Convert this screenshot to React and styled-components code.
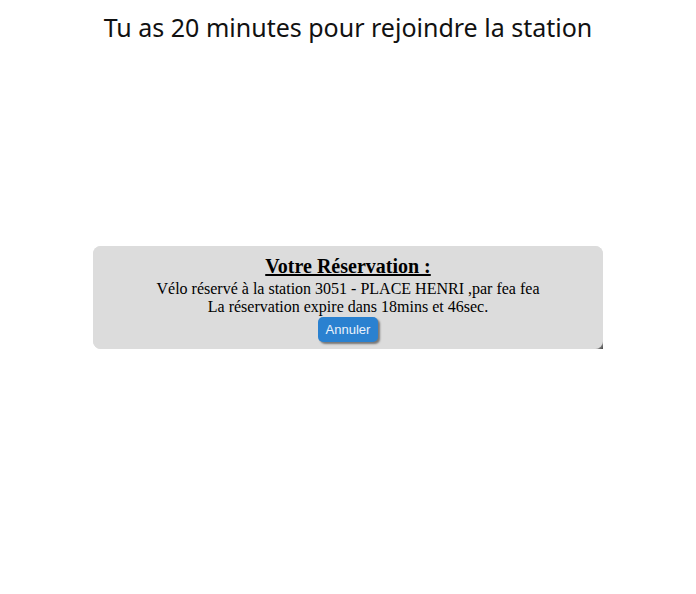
import React from 'react'
import styled, { createGlobalStyle } from 'styled-components'

const Global = createGlobalStyle`
  html, body { margin: 0; padding: 0; background: #fff; }
  body { width: 696px; height: 594px; }
`

const Page = styled.div`
  display: flex;
  flex-direction: column;
  align-items: center;
`

const Headline = styled.h1`
  margin: 10px 0 0 0;
  font-family: "Noto Sans", "Open Sans", sans-serif;
  font-weight: 400;
  font-size: 25px;
  line-height: 34px;
  color: #111;
`

const Card = styled.div`
  position: relative;
  z-index: 0;
  margin-top: 202px;
  width: 510px;
  box-sizing: border-box;
  padding: 7px 0 7px;
  background: #dcdcdc;
  border-radius: 8px;
  display: flex;
  flex-direction: column;
  align-items: center;
  font-family: "Liberation Serif", "Times New Roman", serif;
  color: #000;

  &::before {
    content: "";
    position: absolute;
    right: 0;
    bottom: 0;
    width: 8px;
    height: 8px;
    z-index: -1;
    background: linear-gradient(135deg, #dcdcdc 40%, #8a8a8a 62%, #444 100%);
  }

  &::after {
    content: "";
    position: absolute;
    inset: 0;
    z-index: -1;
    border-radius: 8px;
    background: #dcdcdc;
  }
`

const CardTitle = styled.h2`
  margin: 0;
  font-size: 20px;
  line-height: 27px;
  font-weight: 700;
  text-decoration: underline;
`

const Line = styled.p`
  margin: 0;
  font-size: 16px;
  line-height: 18px;
`

const CancelButton = styled.button`
  margin-top: 1px;
  padding: 0 8px;
  height: 25px;
  border: none;
  border-radius: 5px;
  background: #2a81d0;
  color: #eaf2fb;
  font-family: "Liberation Sans", Arial, sans-serif;
  font-size: 13px;
  box-shadow: 2px 2px 2px #777;
  cursor: pointer;
`

export default function App() {
  return (
    <>
      <Global />
      <Page>
        <Headline>Tu as 20 minutes pour rejoindre la station</Headline>
        <Card>
          <CardTitle>Votre Réservation :</CardTitle>
          <Line>Vélo réservé à la station 3051 - PLACE HENRI ,par fea fea</Line>
          <Line>La réservation expire dans 18mins et 46sec.</Line>
          <CancelButton>Annuler</CancelButton>
        </Card>
      </Page>
    </>
  )
}
